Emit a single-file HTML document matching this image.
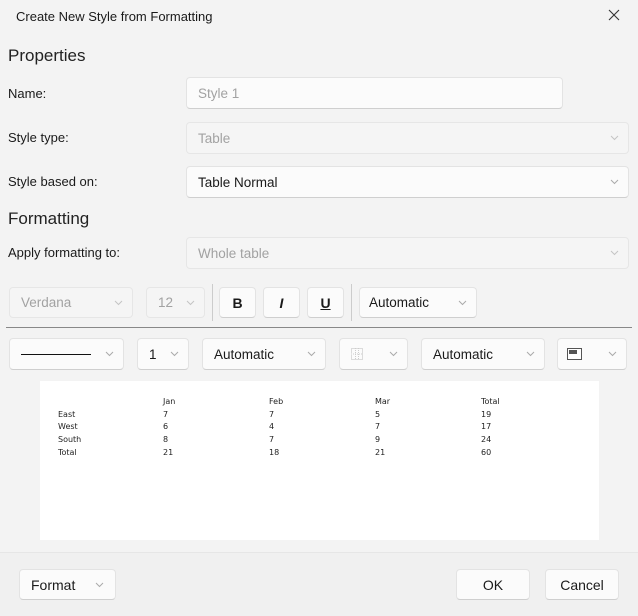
<!DOCTYPE html>
<html><head><style>
*{box-sizing:border-box;margin:0;padding:0}
body{width:638px;height:616px;background:#f3f3f3;font-family:"Liberation Sans",sans-serif;color:#1a1a1a;position:relative;overflow:hidden}
.a{position:absolute}
.t{font-size:13px;white-space:nowrap}
.h{font-size:17px;color:#222}
.box{position:absolute;background:#fbfbfb;border:1px solid #e3e3e3;border-bottom-color:#cfcfcf;border-radius:4px;font-size:13.5px;padding-left:11px;display:flex;align-items:center;color:#1a1a1a}
.dis{background:#f5f5f5;border-color:#e6e6e6;color:#a2a2a2}
.chev{position:absolute;right:9px;top:50%;margin-top:-3px}
.btn{position:absolute;background:#fbfbfb;border:1px solid #e3e3e3;border-bottom-color:#cfcfcf;border-radius:4px;font-size:14px;display:flex;align-items:center;justify-content:center}
.pv{font-family:"DejaVu Sans",sans-serif;font-size:8px;color:#222}
</style></head><body>
<div class="a" style="left:0;top:552px;width:638px;height:64px;background:#f0f0f0;border-top:1px solid #e6e6e6"></div>
<div class="a t" style="left:16px;top:9px;font-size:13px">Create New Style from Formatting</div>
<svg class="a" style="left:608px;top:9px" width="12" height="12"><path d="M1 1L11 11M11 1L1 11" stroke="#333" stroke-width="1.1"/></svg>
<div class="a h" style="left:8px;top:46px">Properties</div>
<div class="a t" style="left:8px;top:86px">Name:</div>
<div class="box" style="left:186px;top:77px;width:377px;height:32px;color:#a2a2a2">Style 1</div>
<div class="a t" style="left:8px;top:130px">Style type:</div>
<div class="box dis" style="left:186px;top:122px;width:443px;height:32px">Table<svg class="chev" width="9" height="6"><path d="M1 1l3.5 3.5L8 1" stroke="#c4c4c4" fill="none"/></svg></div>
<div class="a t" style="left:8px;top:174px">Style based on:</div>
<div class="box" style="left:186px;top:166px;width:443px;height:32px">Table Normal<svg class="chev" width="9" height="6"><path d="M1 1l3.5 3.5L8 1" stroke="#aaa" fill="none"/></svg></div>
<div class="a h" style="left:8px;top:209px">Formatting</div>
<div class="a t" style="left:8px;top:245px">Apply formatting to:</div>
<div class="box dis" style="left:186px;top:237px;width:443px;height:32px">Whole table<svg class="chev" width="9" height="6"><path d="M1 1l3.5 3.5L8 1" stroke="#c4c4c4" fill="none"/></svg></div>

<div class="box dis" style="left:9px;top:287px;width:124px;height:31px">Verdana<svg class="chev" width="9" height="6"><path d="M1 1l3.5 3.5L8 1" stroke="#c4c4c4" fill="none"/></svg></div>
<div class="box dis" style="left:146px;top:287px;width:59px;height:31px">12<svg class="chev" width="9" height="6"><path d="M1 1l3.5 3.5L8 1" stroke="#c4c4c4" fill="none"/></svg></div>
<div class="a" style="left:212px;top:284px;width:1px;height:37px;background:#ccc"></div>
<div class="btn" style="left:219px;top:287px;width:37px;height:31px;font-weight:bold">B</div>
<div class="btn" style="left:263px;top:287px;width:37px;height:31px;font-weight:bold;font-style:italic">I</div>
<div class="btn" style="left:307px;top:287px;width:37px;height:31px;font-weight:bold;text-decoration:underline">U</div>
<div class="a" style="left:351px;top:284px;width:1px;height:37px;background:#ccc"></div>
<div class="box" style="left:359px;top:287px;width:118px;height:31px;padding-left:9px">Automatic<svg class="chev" width="9" height="6"><path d="M1 1l3.5 3.5L8 1" stroke="#aaa" fill="none"/></svg></div>
<div class="a" style="left:6px;top:327px;width:626px;height:1px;background:#888"></div>

<div class="box" style="left:9px;top:338px;width:115px;height:32px"><div style="width:70px;height:1px;background:#111;margin-left:0"></div><svg class="chev" width="9" height="6"><path d="M1 1l3.5 3.5L8 1" stroke="#aaa" fill="none"/></svg></div>
<div class="box" style="left:137px;top:338px;width:52px;height:32px">1<svg class="chev" width="9" height="6"><path d="M1 1l3.5 3.5L8 1" stroke="#aaa" fill="none"/></svg></div>
<div class="box" style="left:202px;top:338px;width:124px;height:32px">Automatic<svg class="chev" width="9" height="6"><path d="M1 1l3.5 3.5L8 1" stroke="#aaa" fill="none"/></svg></div>
<div class="box" style="left:339px;top:338px;width:69px;height:32px"><svg width="12" height="12"><rect x="0.5" y="0.5" width="11" height="11" fill="none" stroke="#bbb" stroke-dasharray="1 1"/><path d="M4.5 0v12M7.5 0v12M0 6h12" stroke="#ccc" stroke-dasharray="1 1"/></svg><svg class="chev" width="9" height="6"><path d="M1 1l3.5 3.5L8 1" stroke="#aaa" fill="none"/></svg></div>
<div class="box" style="left:421px;top:338px;width:124px;height:32px">Automatic<svg class="chev" width="9" height="6"><path d="M1 1l3.5 3.5L8 1" stroke="#aaa" fill="none"/></svg></div>
<div class="box" style="left:557px;top:338px;width:70px;height:32px;padding-left:9px"><svg width="15" height="12"><rect x="0.5" y="0.5" width="14" height="11" fill="#fff" stroke="#555"/><rect x="2" y="2" width="8" height="4" fill="#555"/></svg><svg class="chev" width="9" height="6"><path d="M1 1l3.5 3.5L8 1" stroke="#aaa" fill="none"/></svg></div>

<div class="a" style="left:40px;top:381px;width:559px;height:159px;background:#fff"></div>
<div class="a pv" style="left:58px;top:396px;line-height:12.7px">&nbsp;<br>East<br>West<br>South<br>Total</div>
<div class="a pv" style="left:163px;top:396px;line-height:12.7px">Jan<br>7<br>6<br>8<br>21</div>
<div class="a pv" style="left:269px;top:396px;line-height:12.7px">Feb<br>7<br>4<br>7<br>18</div>
<div class="a pv" style="left:375px;top:396px;line-height:12.7px">Mar<br>5<br>7<br>9<br>21</div>
<div class="a pv" style="left:481px;top:396px;line-height:12.7px">Total<br>19<br>17<br>24<br>60</div>

<div class="box" style="left:19px;top:569px;width:97px;height:31px;font-size:14px;padding-left:11px">Format<svg class="chev" width="9" height="6" style="right:11px"><path d="M1 1l3.5 3.5L8 1" stroke="#aaa" fill="none"/></svg></div>
<div class="btn" style="left:456px;top:569px;width:74px;height:31px">OK</div>
<div class="btn" style="left:545px;top:569px;width:74px;height:31px">Cancel</div>
</body></html>
